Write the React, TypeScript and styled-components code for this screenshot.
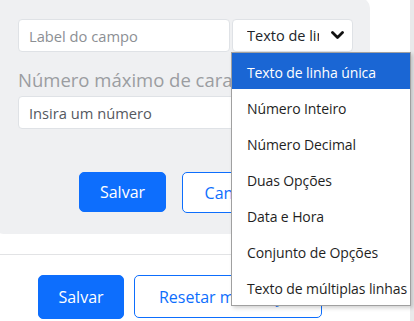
import React from "react";
import styled, { createGlobalStyle } from "styled-components";

const GlobalStyle = createGlobalStyle`
  html, body { margin: 0; padding: 0; background: #ffffff; }
  body { font-family: "Open Sans", "Liberation Sans", sans-serif; }
  * { box-sizing: border-box; }
`;

const Page = styled.div`
  width: 414px;
  height: 321px;
  overflow: hidden;
  display: flex;
  background: #ffffff;
`;

const Main = styled.div`
  flex: 1;
  display: flex;
  flex-direction: column;
  min-width: 0;
`;

const Rail = styled.div`
  width: 4px;
  background: #e9e9ea;
`;

const Card = styled.div`
  margin: -2px 0 0 -6px;
  width: 376px;
  background: #eff0f2;
  border-radius: 10px;
  padding: 21px 17px 21px 24px;
  display: flex;
  flex-direction: column;
`;

const FieldRow = styled.div`
  display: flex;
  gap: 2px;
`;

const TextInput = styled.div<{ $width?: number; $dark?: boolean }>`
  width: ${(p) => (p.$width ? `${p.$width}px` : "100%")};
  height: 33px;
  background: #ffffff;
  border: 1px solid #dfe2e6;
  border-radius: 4px;
  padding: 0 10px;
  display: flex;
  align-items: center;
  font-size: 14.7px;
  color: ${(p) => (p.$dark ? "#55595f" : "#8c8f94")};
  white-space: nowrap;
  overflow: hidden;
`;

const SelectWrap = styled.div`
  position: relative;
  width: 121px;
`;

const SelectBox = styled.div`
  height: 33px;
  background: #ffffff;
  border: 1px solid #dfe2e6;
  border-radius: 4px;
  padding: 0 8px 0 14px;
  display: flex;
  align-items: center;
  font-size: 14.5px;
  color: #212529;
`;

const SelectText = styled.span`
  width: 74px;
  overflow: hidden;
  white-space: nowrap;
`;

const Chevron = styled.svg`
  margin-left: 12px;
  flex: none;
`;

const Dropdown = styled.ul`
  position: absolute;
  top: 33px;
  left: -1px;
  width: 180px;
  margin: 0;
  padding: 0;
  list-style: none;
  background: #ffffff;
  border: 1px solid #a0a0a0;
  box-shadow: 2px 2px 4px rgba(0, 0, 0, 0.18);
  z-index: 10;
  font-family: "Open Sans", "Liberation Sans", sans-serif;
`;

const Option = styled.li<{ $active?: boolean }>`
  height: 36px;
  padding: 3px 0 0 15px;
  display: flex;
  align-items: center;
  font-size: 14px;
  letter-spacing: -0.1px;
  white-space: nowrap;
  color: ${(p) => (p.$active ? "#ffffff" : "#1f1f1f")};
  background: ${(p) => (p.$active ? "#1a66d4" : "transparent")};
`;

const Label = styled.div`
  margin-top: 16px;
  line-height: 24px;
  font-size: 18.5px;
  color: #9b9da1;
  white-space: nowrap;
`;

const SecondInput = styled(TextInput)`
  margin-top: 4px;
`;

const ButtonRow = styled.div<{ $pad: number; $gap: number }>`
  display: flex;
  gap: ${(p) => p.$gap}px;
  padding-left: ${(p) => p.$pad}px;
`;

const CardButtons = styled(ButtonRow)`
  margin-top: 43px;
`;

const Button = styled.button<{ $outline?: boolean; $w: number; $h: number }>`
  width: ${(p) => p.$w}px;
  height: ${(p) => p.$h}px;
  flex: none;
  border-radius: 5px;
  border: 1px solid #0d6efd;
  background: ${(p) => (p.$outline ? "#ffffff" : "#0d6efd")};
  color: ${(p) => (p.$outline ? "#0d6efd" : "#ffffff")};
  font-family: "Open Sans", "Liberation Sans", sans-serif;
  font-size: 16px;
  padding: 0;
  white-space: nowrap;
  overflow: hidden;
`;

const Divider = styled.div`
  margin-top: 20px;
  height: 1px;
  background: #e2e3e5;
`;

const BottomButtons = styled(ButtonRow)`
  margin-top: 20px;
`;

const options = [
  "Texto de linha única",
  "Número Inteiro",
  "Número Decimal",
  "Duas Opções",
  "Data e Hora",
  "Conjunto de Opções",
  "Texto de múltiplas linhas",
];

export default function App() {
  return (
    <>
      <GlobalStyle />
      <Page>
        <Main>
          <Card>
            <FieldRow>
              <TextInput $width={212}>Label do campo</TextInput>
              <SelectWrap>
                <SelectBox>
                  <SelectText>Texto de linha única</SelectText>
                  <Chevron width="13" height="9" viewBox="0 0 13 9">
                    <polyline
                      points="1.5,1.5 6.5,6.5 11.5,1.5"
                      fill="none"
                      stroke="#111"
                      strokeWidth="2.8"
                      strokeLinecap="round"
                      strokeLinejoin="round"
                    />
                  </Chevron>
                </SelectBox>
                <Dropdown>
                  {options.map((o, i) => (
                    <Option key={o} $active={i === 0}>
                      {o}
                    </Option>
                  ))}
                </Dropdown>
              </SelectWrap>
            </FieldRow>
            <Label>Número máximo de caracteres</Label>
            <SecondInput $dark>Insira um número</SecondInput>
            <CardButtons $pad={61} $gap={16}>
              <Button $w={87} $h={40}>Salvar</Button>
              <Button $outline $w={110} $h={41}>Cancelar</Button>
            </CardButtons>
          </Card>
          <Divider />
          <BottomButtons $pad={38} $gap={10}>
            <Button $w={86} $h={44}>Salvar</Button>
            <Button $outline $w={188} $h={43}>Resetar mudanças</Button>
          </BottomButtons>
        </Main>
        <Rail />
      </Page>
    </>
  );
}
